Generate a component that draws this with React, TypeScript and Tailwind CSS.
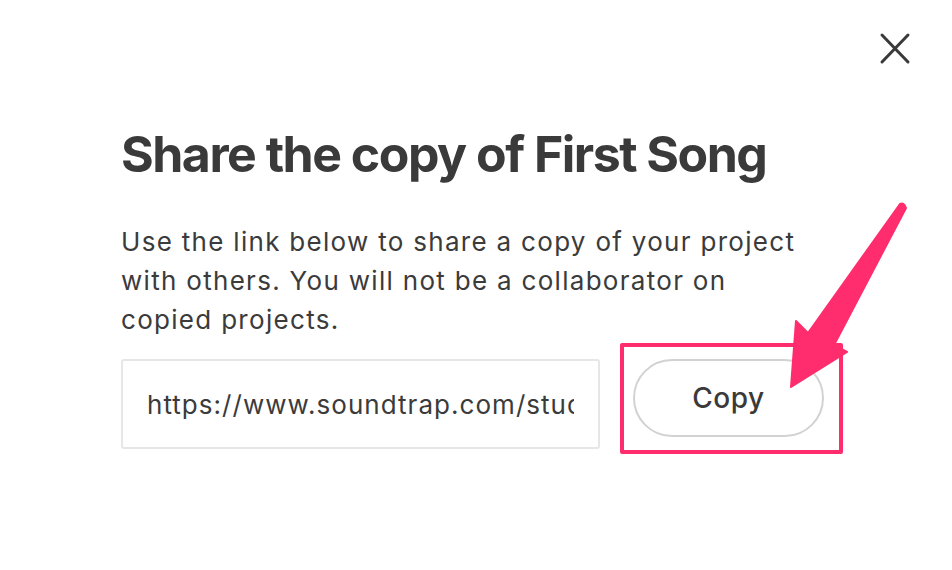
export default function App() {
  return (
    <div
      className="relative h-[570px] w-[952px] overflow-hidden bg-white text-[#3b3b3b]"
      style={{ fontFamily: "Inter, 'Liberation Sans', sans-serif" }}
    >
      <button className="absolute left-[879px] top-[32px] text-[#3a3a3a]">
        <svg width="32" height="33" viewBox="0 0 32 33" fill="none">
          <path
            d="M3 3 L29 30 M29 3 L3 30"
            stroke="currentColor"
            strokeWidth="3"
            strokeLinecap="round"
          />
        </svg>
      </button>

      <div className="pl-[121px] pt-[126px]">
        <h2 className="text-[50px] font-bold leading-[56px] tracking-[-0.03em] text-[#3a3a3a]">
          Share the copy of First Song
        </h2>
        <p className="mt-[40px] w-[700px] text-[26px] leading-[39px] tracking-[0.05em] text-[#3b3b3b]">
          Use the link below to share a copy of your project with others. You
          will not be a collaborator on copied projects.
        </p>

        <div className="mt-[20px] flex items-start">
          <input
            readOnly
            value="https://www.soundtrap.com/studio/a8f3c2e1-share-copy"
            className="h-[90px] w-[479px] rounded-[3px] border-2 border-[#e6e6e6] pl-[24px] pr-[24px] text-[26px] tracking-[0.04em] text-[#3b3b3b] outline-none"
          />
          <div className="relative ml-[33px]">
            <button className="h-[78px] w-[191px] rounded-full border-2 border-[#d2d2d2] bg-white text-[28px] font-medium tracking-[0.02em] text-[#3a3a3a]">
              Copy
            </button>
            {/* annotation */}
            <div className="pointer-events-none absolute -left-[13px] -top-[16px] h-[111px] w-[223px] rounded-[2px] border-[4px] border-[#ff2d6d]" />
          </div>
        </div>
      </div>

      <svg
        className="pointer-events-none absolute left-0 top-0"
        width="952"
        height="570"
        viewBox="0 0 952 570"
      >
        <path
          d="M900 204 Q904 202 906 208 L834 345 L847 352 L791 387 L796 321 L808 333 Z"
          fill="#ff2d6d"
          stroke="#ff2d6d"
          strokeWidth="2"
          strokeLinejoin="round"
        />
      </svg>
    </div>
  );
}
